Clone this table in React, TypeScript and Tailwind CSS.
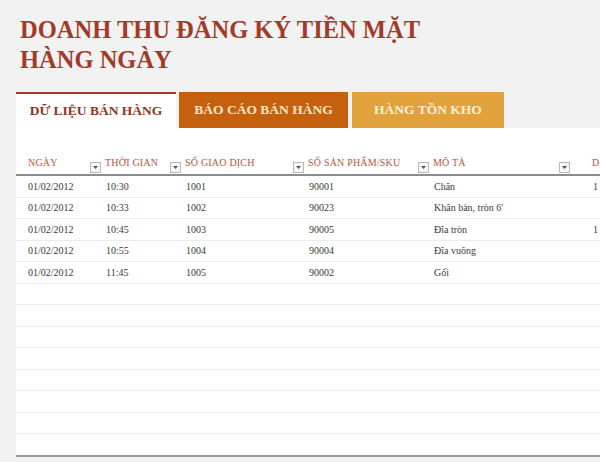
import React from "react";

const COLS = "grid-cols-[87px_80px_123px_125px_159px_1fr]";

const HEADERS = ["NGÀY", "THỜI GIAN", "SỐ GIAO DỊCH", "SỐ SẢN PHẨM/SKU", "MÔ TẢ", "D"];

const ROWS: string[][] = [
  ["01/02/2012", "10:30", "1001", "90001", "Chăn", "1"],
  ["01/02/2012", "10:33", "1002", "90023", "Khăn bàn, tròn 6'", ""],
  ["01/02/2012", "10:45", "1003", "90005", "Đĩa tròn", "1"],
  ["01/02/2012", "10:55", "1004", "90004", "Đĩa vuông", ""],
  ["01/02/2012", "11:45", "1005", "90002", "Gối", ""],
];

function Dropdown({ className = "" }: { className?: string }) {
  return (
    <div
      className={`w-[11px] h-[11px] shrink-0 border border-[#b8b8b8] bg-[#f7f7f7] flex items-center justify-center ${className}`}
    >
      <svg width="5" height="3" viewBox="0 0 5 3">
        <path d="M0 0h5L2.5 3z" fill="#555" />
      </svg>
    </div>
  );
}

export default function App() {
  const empty = Array.from({ length: 8 });
  return (
    <div className="w-[600px] h-[462px] bg-[#f2f2f2] overflow-hidden font-['Liberation_Serif',serif]">
      {/* Title */}
      <h1 className="pl-5 pt-[15px] text-[24.5px] leading-[30px] font-bold text-[#a23a2a]">
        DOANH THU ĐĂNG KÝ TIỀN MẶT
        <br />
        HÀNG NGÀY
      </h1>

      {/* Tabs */}
      <div className="flex mt-[17px] pl-4 h-9 text-[13.5px] font-bold">
        <div className="w-[160px] bg-white border-t-2 border-[#a23a2a] flex items-center justify-center text-[#8f3526]">
          DỮ LIỆU BÁN HÀNG
        </div>
        <div className="ml-[3px] w-[169px] bg-[#c5600f] flex items-center justify-center text-[#fbe6c8]">
          BÁO CÁO BÁN HÀNG
        </div>
        <div className="ml-1 w-[152px] bg-[#e2a23b] flex items-center justify-center text-[#fdf0dc]">
          HÀNG TỒN KHO
        </div>
      </div>

      {/* Sheet */}
      <div className="ml-4 bg-white h-[329px] pt-[22px] border-b-2 border-[#9a9a9a]">
        <div className={`grid ${COLS} h-[26px] border-b-2 border-[#8c8c8c] text-[10px] text-[#b5553a]`}>
          {HEADERS.map((h, i) => (
            <div
              key={h}
              className={`flex items-end justify-between overflow-hidden whitespace-nowrap pb-[1px] ${i === 0 ? "pl-3" : "pl-[2px]"}`}
            >
              <span className="pb-[3px] tracking-[0.2px]">{h}</span>
              {i < 5 && <Dropdown className={i === 4 ? "mr-[20px]" : "mr-[2px]"} />}
            </div>
          ))}
        </div>

        {ROWS.map((r, ri) => (
          <div
            key={ri}
            className={`grid ${COLS} h-[21.5px] border-b border-[#ececec] text-[10px] text-[#3a3a3a] items-center`}
          >
            {r.map((c, i) => (
              <div key={i} className={`whitespace-nowrap overflow-hidden ${i === 0 ? "pl-3" : "pl-[3px]"}`}>
                {c}
              </div>
            ))}
          </div>
        ))}

        {empty.map((_, i) => (
          <div key={i} className={`h-[21.5px] ${i < 7 ? "border-b border-[#ececec]" : ""}`} />
        ))}
      </div>
    </div>
  );
}
